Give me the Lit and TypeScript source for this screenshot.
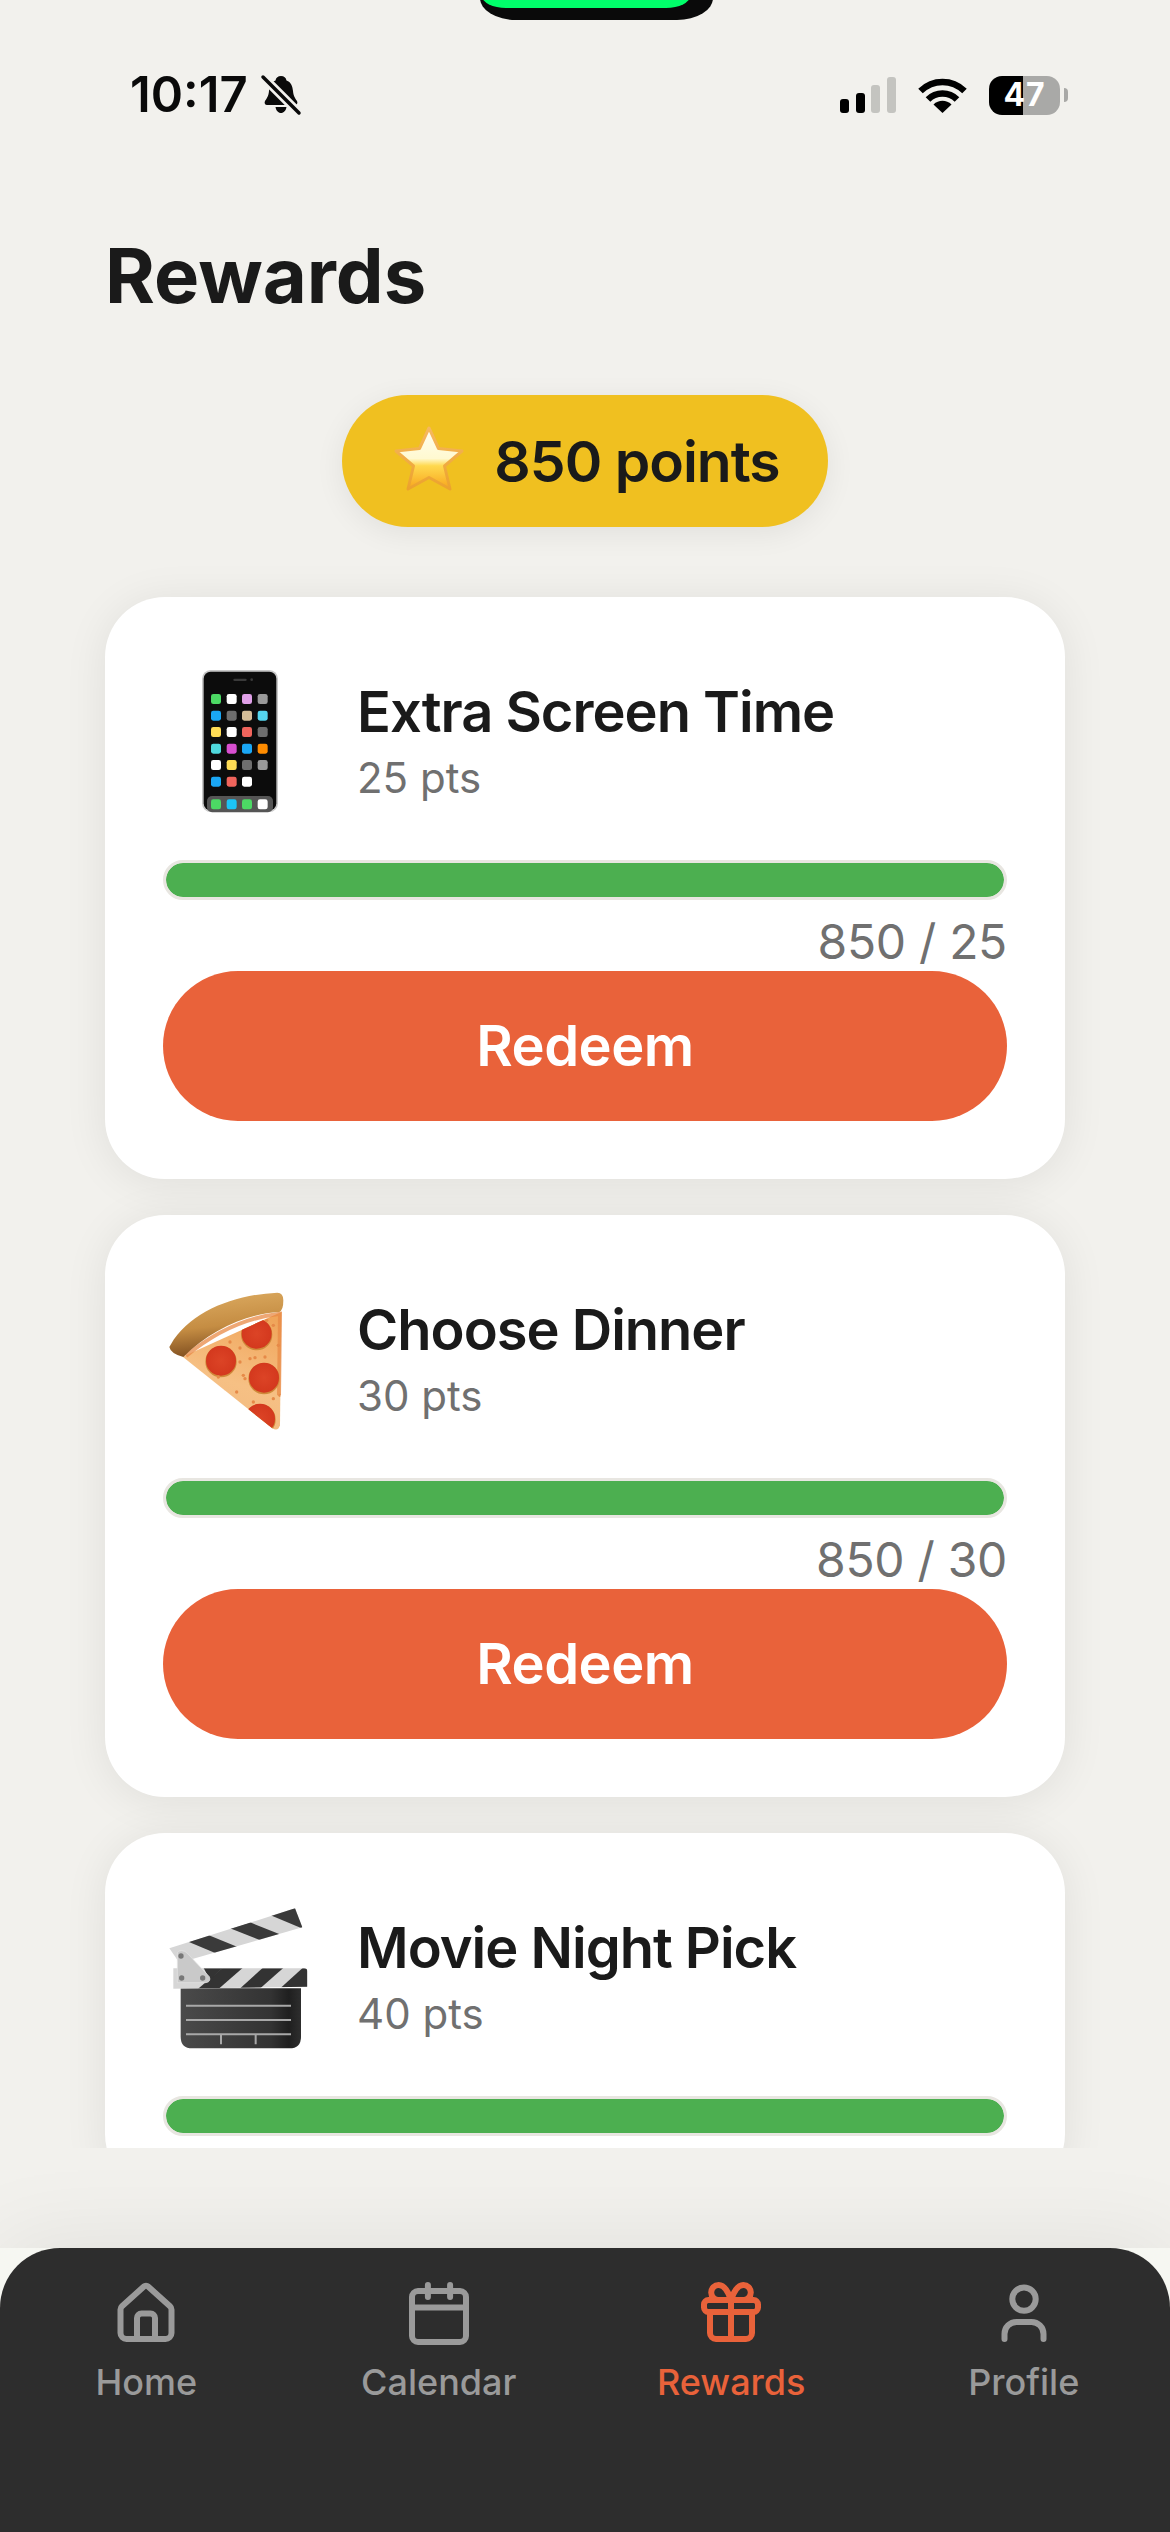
import { LitElement, html, css, svg } from "lit";
import { customElement } from "lit/decorators.js";

const grid = [
  ["#4cd964", "#fff", "#e0a0e8", "#9a9a9a"],
  ["#1aa7f5", "#6e6e6e", "#d4bd98", "#55d6ee"],
  ["#ffdc55", "#fff", "#f0645c", "#6e6e6e"],
  ["#4fd8dc", "#d84fd0", "#1aa7f5", "#ff8c00"],
  ["#fff", "#ffdc55", "#6e6e6e", "#9a9a9a"],
  ["#1aa7f5", "#f0645c", "#fff", ""],
];
const dock = ["#4cd964", "#1cc4f5", "#4cd964", "#fff"];
const colX = [228, 275, 321, 368];
const rowY = [165, 215, 264, 314, 363, 413];

const phone = svg`
  <rect x="186" y="78" width="228" height="426" rx="26" fill="#c8c8c8"/>
  <rect x="191" y="83" width="218" height="416" rx="21" fill="#0c0c0c"/>
  <rect x="280" y="104" width="40" height="7" rx="3.500" fill="#3a3a3a"/>
  <circle cx="335" cy="107" r="4" fill="#3a3a3a"/>
  ${grid.map((r, j) => r.map((c, i) => c ? svg`<rect x=${colX[i] - 15} y=${rowY[j] - 15} width="30" height="30" rx="7" fill=${c}/>` : null))}
  <rect x="201" y="456" width="198" height="49" rx="15" fill="#555"/>
  ${dock.map((c, i) => svg`<rect x=${colX[i] - 15} y="466" width="30" height="30" rx="7" fill=${c}/>`)}
`;

const pizza = svg`
  <defs>
    <linearGradient id="pz-cheese" x1="0.7" y1="0" x2="0.4" y2="1">
      <stop offset="0" stop-color="#f0a55a"/><stop offset="0.6" stop-color="#f6c084"/><stop offset="1" stop-color="#f2ba80"/>
    </linearGradient>
    <linearGradient id="pz-crust" x1="0.4" y1="0" x2="0.6" y2="1">
      <stop offset="0" stop-color="#dba95f"/><stop offset="0.5" stop-color="#c58d43"/><stop offset="1" stop-color="#74441a"/>
    </linearGradient>
    <radialGradient id="pz-pep" cx="0.5" cy="0.5" r="0.6">
      <stop offset="0" stop-color="#dc4426"/><stop offset="1" stop-color="#d2361c"/>
    </radialGradient>
    <clipPath id="pz-clip"><path d="M128 284 L424 150 L420 490 Q414 510 396 498 Z"/></clipPath>
  </defs>
  <path d="M128 284 L424 150 L420 490 Q414 510 396 498 Z" fill="url(#pz-cheese)"/>
  <path d="M138 282 Q270 172 420 155 L417 400" fill="none" stroke="#e88a45" stroke-width="12" opacity=".75"/>
  <g clip-path="url(#pz-clip)">
    ${[[350,215],[243,296],[372,347],[360,470]].map(([x, y]) => svg`
      <circle cx=${x} cy=${y + 3} r="47" fill="#cf8a3a"/>
      <circle cx=${x} cy=${y} r="45" fill="url(#pz-pep)"/>`)}
    ${[[270,240],[300,258],[415,250],[330,290],[345,287],[310,340],[290,390],[250,390],[270,410],[315,350],[400,190],[225,205],[380,175],[235,345],[420,400],[300,300],[200,240],[285,205],[375,285],[340,420],[400,410],[290,430]].map(([x, y]) => svg`<circle cx=${x} cy=${y} r="5" fill="#e68a48"/>`)}
  </g>
  <path d="M92 248 C150 150 280 98 412 92 Q430 92 430 115 Q430 145 418 150 C320 155 210 205 130 285 Q92 275 88 255 Z" fill="url(#pz-crust)"/>
`;

const clapper = svg`
  <defs>
    <linearGradient id="cl-body" x1="0" y1="0" x2="1" y2="0">
      <stop offset="0" stop-color="#4a4a4a"/><stop offset="0.75" stop-color="#333"/><stop offset="0.9" stop-color="#1f1f1f"/><stop offset="1" stop-color="#2e2e2e"/>
    </linearGradient>
    <clipPath id="cl-top"><path d="M88 205 L465 85 L487 142 L118 248 Z"/></clipPath>
    <clipPath id="cl-bar"><path d="M100 265 H492 Q502 265 502 275 V320 L100 326 Z"/></clipPath>
  </defs>
  <path d="M88 205 L465 85 L487 142 L118 248 Z" fill="#d6d6d6"/>
  <g clip-path="url(#cl-top)" fill="#3a3a3a">
    <path d="M145 185 L205 165 L302 205 L240 225 Z"/>
    <path d="M270 145 L330 127 L425 165 L365 182 Z"/>
    <path d="M390 105 L470 80 L490 145 L485 145 Z"/>
  </g>
  <path d="M122 325 H483 V470 Q483 505 448 505 H157 Q122 505 122 470 Z" fill="url(#cl-body)"/>
  <path d="M100 265 H492 Q502 265 502 275 V320 L100 326 Z" fill="#d6d6d6"/>
  <g clip-path="url(#cl-bar)" fill="#333">
    <path d="M170 330 L250 262 L310 262 L232 330 Z"/>
    <path d="M295 330 L370 262 L432 262 L355 330 Z"/>
    <path d="M415 330 L490 262 L510 262 L510 330 Z"/>
    <path d="M190 262 H250 L210 300 Z"/>
  </g>
  <g stroke="#a8a8a8" stroke-width="6" fill="none">
    <path d="M138 377 H453 M138 420 H453 M138 463 H453 M243 463 V493 M347 463 V493"/>
  </g>
  <path d="M112 222 Q112 212 125 212 Q135 212 142 220 L208 290 Q214 305 198 308 H112 Z" fill="#c9c9c9" stroke="#e6e6e6" stroke-width="2"/>
  <circle cx="123" cy="228" r="8" fill="#777"/><circle cx="125" cy="294" r="8" fill="#777"/><circle cx="188" cy="294" r="8" fill="#777"/>
`;

const star = html`<svg class="star" viewBox="0 0 78 78" aria-hidden="true">
  <defs>
    <linearGradient id="st-fill" x1="0" y1="0" x2="0" y2="1">
      <stop offset="0" stop-color="#fffef2"/><stop offset="0.5" stop-color="#fff9d0"/>
      <stop offset="0.62" stop-color="#ffd94e"/><stop offset="1" stop-color="#f7a51c"/>
    </linearGradient>
    <linearGradient id="st-edge" x1="0" y1="0" x2="0" y2="1">
      <stop offset="0" stop-color="#f6b860"/><stop offset="1" stop-color="#eca22c"/>
    </linearGradient>
  </defs>
  <path d="M39 6 L48.500 26.500 L72 29 L54.500 44 L60 67 L39 55.500 L18 67 L23.500 44 L6 29 L29.500 26.500 Z"
    fill="url(#st-fill)" stroke="url(#st-edge)" stroke-width="3" stroke-linejoin="round"/>
</svg>`;

const icons: Record<string, unknown> = {
  Home: svg`<path d="M3.500 11.200a1.500 1.500 0 0 1 .5-1.100l7.300-6.600a1 1 0 0 1 1.400 0l7.300 6.600a1.500 1.500 0 0 1 .5 1.100V19a2 2 0 0 1-2 2H5.500a2 2 0 0 1-2-2z"/><path d="M9 21v-7a1.500 1.500 0 0 1 1.500-1.500h3A1.500 1.500 0 0 1 15 14v7"/>`,
  Calendar: svg`<rect x="3" y="5" width="18" height="17" rx="2"/><path d="M8.300 3v4M15.700 3v4M3 10.500h18"/>`,
  Rewards: svg`<rect x="3" y="8" width="18" height="4" rx="1.500"/><path d="M5 12v7a2 2 0 0 0 2 2h10a2 2 0 0 0 2-2V12M12 8v13"/><path d="M12 8C11 5 9.700 3 7.900 3a2.500 2.500 0 0 0 0 5M12 8c1-3 2.300-5 4.100-5a2.500 2.500 0 0 1 0 5"/>`,
  Profile: svg`<circle cx="12" cy="7.700" r="3.900"/><path d="M5.500 21v-1.700a4 4 0 0 1 4-4h5a4 4 0 0 1 4 4V21"/>`,
};

const rewards = [
  { name: "Extra Screen Time", pts: 25, art: phone, full: true },
  { name: "Choose Dinner", pts: 30, art: pizza, full: true },
  { name: "Movie Night Pick", pts: 40, art: clapper, full: false },
];

@customElement("app-root")
export class AppRoot extends LitElement {
  static styles = css`
    :host { display: block; width: 1170px; height: 2532px; background: #f2f1ed; font-family: Inter, "Liberation Sans", sans-serif; color: #1a1a1a; position: relative; overflow: hidden; }
    .island { position: absolute; left: 480px; top: -30px; width: 233px; height: 50px; background: #0a0a0a; border-radius: 0 0 36px 36px / 0 0 22px 22px; display: flex; align-items: flex-end; box-sizing: border-box; padding: 0 0 12px 2px; }
    .island i { display: block; width: 208px; height: 30px; background: #00ff6a; border-radius: 0 0 24px 24px / 0 0 12px 12px; }
    .main { height: 2248px; box-sizing: border-box; }
    .scroll { height: 2148px; overflow: hidden; }
    .status { height: 74px; padding: 58px 102px 0 130px; display: flex; align-items: center; box-sizing: content-box; }
    .time { font-size: 49px; font-weight: 600; color: #0a0a0a; line-height: 56px; }
    .bell { width: 42px; height: 42px; margin-left: 12px; }
    .sys { margin-left: auto; display: flex; align-items: center; gap: 22px; }
    .battery { display: flex; align-items: center; gap: 4px; }
    .bat { width: 71px; height: 39px; border-radius: 13px; background: linear-gradient(90deg, #000 48%, #a9a9a7 48%); color: #fff; font-size: 32px; font-weight: 700; display: flex; align-items: center; justify-content: center; line-height: 1; letter-spacing: 1px; }
    .nub { width: 4px; height: 14px; border-radius: 0 4px 4px 0; background: #a9a9a7; }
    h1 { margin: 0; padding: 96px 105px 0; font-size: 76px; font-weight: 700; line-height: 94px; color: #1a1a1a; }
    .pill-row { display: flex; justify-content: center; padding-top: 73px; }
    .pill { display: flex; align-items: center; gap: 26px; height: 132px; padding: 0 48px; border-radius: 66px; background: #f0c020; box-shadow: 0 6px 30px rgba(0,0,0,.07); font-size: 57px; font-weight: 600; letter-spacing: -1px; color: #1a1a1a; }
    .star { width: 78px; height: 78px; display: block; }
    .list { display: flex; flex-direction: column; gap: 36px; padding: 70px 105px 0; }
    .card { background: #fff; border-radius: 60px; padding: 58px; box-shadow: 0 4px 44px rgba(0,0,0,.08); }
    .row { display: flex; align-items: center; gap: 34px; height: 170px; }
    .art { width: 160px; height: 170px; display: block; flex: none; }
    .info { margin-top: 3px; }
    .name { font-size: 56px; font-weight: 600; line-height: 65px; letter-spacing: -1px; color: #1a1a1a; }
    .sub { font-size: 42px; line-height: 51px; margin-top: 7px; color: #707070; }
    .track { margin-top: 35px; height: 40px; box-sizing: border-box; border: 3px solid #e8e6e1; border-radius: 20px; background: #e8e6e1; overflow: hidden; }
    .fill { height: 100%; background: #4caf50; border-radius: 17px; }
    .count { text-align: right; font-size: 48px; line-height: 58px; letter-spacing: -0.3px; color: #707070; margin-top: 13px; }
    .btn { display: flex; align-items: center; justify-content: center; height: 150px; border-radius: 75px; background: #e9623a; color: #fff; font-size: 56px; font-weight: 600; letter-spacing: -0.5px; }
    .navwrap { height: 284px; background: #f6f7f2; box-shadow: 0 0 90px rgba(0,0,0,.08); }
    .nav { height: 100%; box-sizing: border-box; background: #2d2d2d; border-radius: 60px 60px 0 0; display: grid; grid-template-columns: repeat(4, 1fr); padding-top: 28px; }
    .tab { display: flex; flex-direction: column; align-items: center; color: #9a9a9a; font-size: 36px; font-weight: 500; line-height: 44px; gap: 12px; }
    .tab.on { color: #e9623a; }
    .tab svg { width: 72px; height: 72px; fill: none; stroke: currentColor; stroke-width: 2; stroke-linecap: round; stroke-linejoin: round; display: block; }
  `;

  render() {
    return html`
      <div class="island"><i></i></div>
      <div class="main">
        <div class="scroll">
          <div class="status">
            <span class="time">10:17</span>
            <svg class="bell" viewBox="0 0 42 42" aria-hidden="true">
              <path d="M21 2c3 0 5 1.500 5.500 4.500C31 8 32.500 12 33 17c.4 5 2 7 4 10 1 2 0 4-2 4H7c-2 0-3-2-2-4 2-3 3.600-5 4-10 .5-5 2-9 6.500-10.500C16 3.500 18 2 21 2zM15.500 33h11c-.5 3.500-2.800 6-5.500 6s-5-2.500-5.500-6z" fill="#0a0a0a"/>
              <path d="M2 2 L40 40" stroke="#f2f1ed" stroke-width="9"/>
              <path d="M3 3 L39 39" stroke="#0a0a0a" stroke-width="3.500" stroke-linecap="round"/>
            </svg>
            <div class="sys">
              <svg width="56" height="36" viewBox="0 0 56 36" aria-hidden="true">
                <rect x="0" y="22" width="9" height="14" rx="3" fill="#000"/>
                <rect x="16" y="16" width="9" height="20" rx="3" fill="#000"/>
                <rect x="31" y="8" width="9" height="28" rx="3" fill="#c4c4c0"/>
                <rect x="47" y="0" width="9" height="36" rx="3" fill="#c4c4c0"/>
              </svg>
              <svg width="49" height="36" viewBox="0 0 49 36" aria-hidden="true" fill="none" stroke="#000" stroke-width="6.500">
                <path d="M2.500 14C15 2 34 2 46.500 14"/>
                <path d="M10 22.500C18 14.500 31 14.500 39 22.500"/>
                <path d="M24.500 36 L15.500 27.500 C20.500 22.500 28.500 22.500 33.500 27.500 Z" fill="#000" stroke="none"/>
              </svg>
              <div class="battery"><div class="bat">47</div><div class="nub"></div></div>
            </div>
          </div>
          <h1>Rewards</h1>
          <div class="pill-row"><div class="pill">${star}<span>850 points</span></div></div>
          <div class="list">
            ${rewards.map((r) => html`
              <div class="card">
                <div class="row">
                  <svg class="art" viewBox="69 33 480 510" aria-hidden="true">${r.art}</svg>
                  <div class="info"><div class="name">${r.name}</div><div class="sub">${r.pts} pts</div></div>
                </div>
                <div class="track"><div class="fill"></div></div>
                ${r.full ? html`
                  <div class="count">850 / ${r.pts}</div>
                  <div class="btn">Redeem</div>` : null}
              </div>`)}
          </div>
        </div>
      </div>
      <div class="navwrap">
        <div class="nav">
          ${Object.keys(icons).map((k) => html`
            <div class="tab ${k === "Rewards" ? "on" : ""}">
              <svg viewBox="0 0 24 24" aria-hidden="true">${icons[k]}</svg>
              <span>${k}</span>
            </div>`)}
        </div>
      </div>
    `;
  }
}
